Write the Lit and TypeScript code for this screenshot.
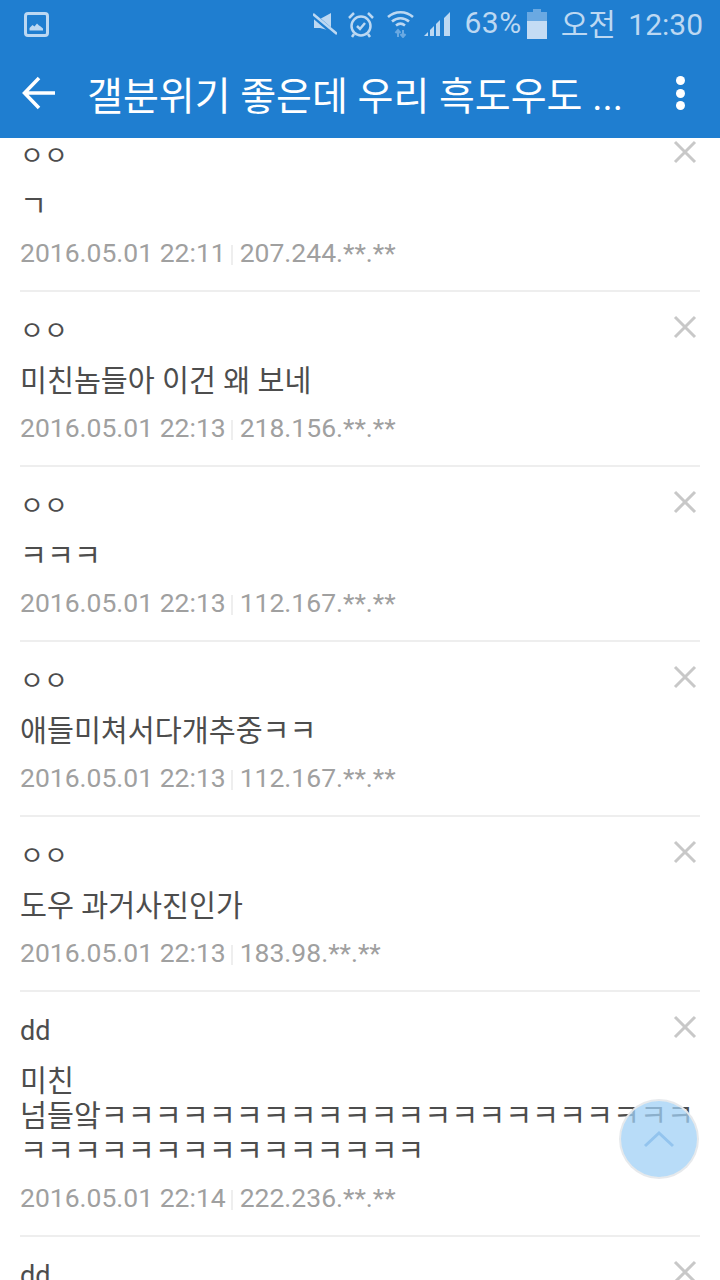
import { css, html, LitElement } from "lit";
import { customElement } from "lit/decorators.js";

const comments = [
  { name: "ㅇㅇ", body: "ㄱ", date: "2016.05.01 22:11", ip: "207.244.**.**" },
  { name: "ㅇㅇ", body: "미친놈들아 이건 왜 보네", date: "2016.05.01 22:13", ip: "218.156.**.**" },
  { name: "ㅇㅇ", body: "ㅋㅋㅋ", date: "2016.05.01 22:13", ip: "112.167.**.**" },
  { name: "ㅇㅇ", body: "애들미쳐서다개추중ㅋㅋ", date: "2016.05.01 22:13", ip: "112.167.**.**" },
  { name: "ㅇㅇ", body: "도우 과거사진인가", date: "2016.05.01 22:13", ip: "183.98.**.**" },
  {
    name: "dd",
    body: "미친\n넘들앜ㅋㅋㅋㅋㅋㅋㅋㅋㅋㅋㅋㅋㅋㅋㅋㅋㅋㅋㅋㅋㅋㅋㅋㅋㅋㅋㅋㅋㅋㅋㅋㅋㅋㅋㅋㅋㅋ",
    date: "2016.05.01 22:14",
    ip: "222.236.**.**",
  },
  { name: "dd", body: "", date: "", ip: "" },
];

@customElement("app-root")
class AppRoot extends LitElement {
  render() {
    return html`<div class="page">
      <header>
        <div class="status">
          <svg class="gallery" width="25" height="25" viewBox="0 0 25 25">
            <rect x="1.500" y="1.500" width="22" height="22" rx="2.500" fill="none" stroke="#bcd8f2" stroke-width="3" />
            <path d="M5.500 18.500v-2.500l3-3 2 1.500 2.500-3 2 2 1 .5 3 2.500v2z" fill="#bcd8f2" />
          </svg>
          <span class="spacer"></span>
          <svg class="mute" width="24" height="22" viewBox="0 0 24 22">
            <path d="M1 6h6l11-6v18L7 15H1z" fill="#bcd8f2" />
            <path d="M1 3l22 19" stroke="#1f7ed0" stroke-width="5" />
            <path d="M0 1l24 20" stroke="#bcd8f2" stroke-width="2.500" />
          </svg>
          <svg class="alarm" width="26" height="27" viewBox="0 0 26 27" fill="none" stroke="#bcd8f2">
            <circle cx="13" cy="15" r="9.500" stroke-width="2.500" />
            <path d="M9 15l3 3 5-6M1 7l5-5M25 7l-5-5M6 23l-2 3M20 23l2 3" stroke-width="2.500" />
          </svg>
          <svg class="wifi" width="27" height="28" viewBox="0 0 27 28" fill="none">
            <path d="M1 7c7-6.500 18-6.500 25 0M5 11.500c5-4.500 12-4.500 17 0M9 15.500c3-2.500 6-2.500 9 0" stroke="#bcd8f2" stroke-width="2.500" />
            <path d="M11 20v7M8.500 23l2.500-3 2.500 3M16 27v-7M13.500 24l2.500 3 2.500-3" stroke="#6aa9e2" stroke-width="2" />
          </svg>
          <svg class="signal" width="27" height="26" viewBox="0 0 27 26" fill="#bcd8f2">
            <path d="M0 25l4-4v4zM6 25v-6l4-4v10zM12 25V13l4-4v16zM20 25V7l6-6v24z" />
          </svg>
          <span class="text pct">63%</span>
          <svg class="battery" width="20" height="30" viewBox="0 0 20 30">
            <path d="M6 0h8v3h6v27H0V3h6z" fill="#6aa9e2" />
            <rect y="12" width="20" height="18" fill="#c4dcf4" />
          </svg>
          <span class="text time">오전 12:30</span>
        </div>
        <div class="toolbar">
          <svg class="back" width="34" height="34" viewBox="0 0 34 34" fill="none" stroke="#fff" stroke-width="3.500">
            <path d="M33 17H3M17 2L2.500 17 17 32" />
          </svg>
          <span class="title">갤분위기 좋은데 우리 흑도우도 ...</span>
          <span class="dots"><i></i><i></i><i></i></span>
        </div>
      </header>
      <div class="viewport">
        <div class="list">
          ${comments.map(
            (c) => html`<div class="row">
              <div class="name">
                ${c.name === "ㅇㅇ" ? html`<span class="jamo">${c.name}</span>` : c.name}
              </div>
              <div class="body">${c.body}</div>
              ${c.date
                ? html`<div class="meta">${c.date}<span class="bar"></span>${c.ip}</div>`
                : ""}
              <svg class="close" width="24" height="24" viewBox="0 0 24 24">
                <path d="M2 2l20 20M22 2L2 22" stroke="#c8c8c8" stroke-width="3" />
              </svg>
            </div>`
          )}
        </div>
      </div>
      <div class="fab">
        <svg width="32" height="18" viewBox="0 0 32 18" fill="none">
          <path d="M2 16L16 3l14 13" stroke="#93c4ee" stroke-width="3" />
        </svg>
      </div>
    </div>`;
  }

  static styles = css`
    :host {
      display: block;
    }
    .page {
      position: relative;
      width: 720px;
      height: 1280px;
      overflow: hidden;
      background: #fff;
      font-family: Roboto, "Noto Sans CJK KR", sans-serif;
    }
    header {
      height: 138px;
      background: #1f7ed0;
    }
    .status {
      height: 48px;
      padding: 0 17px 2px 24px;
      display: flex;
      align-items: center;
      color: #bcd8f2;
      font-size: 30px;
    }
    .spacer {
      flex: 1;
    }
    .text {
      margin-bottom: 4px;
    }
    .alarm {
      margin-left: 11px;
    }
    .wifi {
      margin-left: 13px;
    }
    .signal {
      margin-left: 10px;
    }
    .pct {
      margin-left: 13px;
      letter-spacing: 0.5px;
    }
    .battery {
      margin-left: 5px;
    }
    .time {
      margin-left: 14px;
      word-spacing: 5px;
    }
    .toolbar {
      height: 88px;
      display: flex;
      align-items: center;
      padding: 0 35px 2px 22px;
      box-sizing: border-box;
      color: #fff;
    }
    .title {
      flex: 1;
      margin-left: 31px;
      font-size: 39px;
      white-space: nowrap;
    }
    .dots {
      display: flex;
      flex-direction: column;
      gap: 3.500px;
    }
    .dots i {
      width: 9px;
      height: 9px;
      border-radius: 50%;
      background: #fff;
    }
    .viewport {
      height: 1142px;
      overflow: hidden;
    }
    .list {
      margin-top: -21px;
    }
    .row {
      position: relative;
      margin: 0 20px;
      padding: 20px 0 20px;
      border-bottom: 2px solid #eeeeee;
      color: #4d4d4d;
      font-size: 27px;
      line-height: 35px;
    }
    .name {
      height: 33px;
      padding-top: 2px;
      margin-bottom: 17px;
    }
    .jamo {
      font-size: 26px;
      vertical-align: 4px;
    }
    .body {
      font-size: 29.300px;
      white-space: pre-wrap;
      word-break: break-all;
    }
    .meta {
      margin-top: 11px;
      color: #a0a0a0;
      font-size: 26.500px;
      display: flex;
      align-items: center;
    }
    .bar {
      width: 2px;
      height: 20px;
      margin: 4px 7px 0 5px;
      background: #eeeeee;
    }
    .close {
      position: absolute;
      top: 23px;
      right: 3px;
    }
    .fab {
      position: absolute;
      left: 619px;
      top: 1099px;
      width: 80px;
      height: 80px;
      box-sizing: border-box;
      border: 2px solid rgba(235, 235, 235, 0.9);
      border-radius: 50%;
      background: rgba(160, 208, 245, 0.75);
      display: flex;
      align-items: center;
      justify-content: center;
    }
  `;
}
